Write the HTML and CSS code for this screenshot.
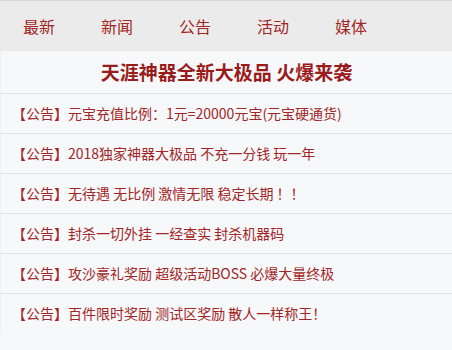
FILE: index.html
```html
<!DOCTYPE html>
<html lang="zh-CN">
<head>
    <meta charset="UTF-8">
    <meta name="viewport" content="width=device-width, initial-scale=1.0">
    <title>公告</title>
    <link rel="stylesheet" href="styles.css">
</head>
<body>
    <nav class="nav">
        <a href="#">最新</a>
        <a href="#">新闻</a>
        <a href="#">公告</a>
        <a href="#">活动</a>
        <a href="#">媒体</a>
    </nav>

    <div class="news">
        <h1 class="news-title">天涯神器全新大极品 火爆来袭</h1>
        <ul class="news-list">
            <li><a href="#">【公告】元宝充值比例：1元=20000元宝(元宝硬通货)</a></li>
            <li><a href="#">【公告】2018独家神器大极品 不充一分钱 玩一年</a></li>
            <li><a href="#">【公告】无待遇 无比例 激情无限 稳定长期 ！！</a></li>
            <li><a href="#">【公告】封杀一切外挂 一经查实 封杀机器码</a></li>
            <li><a href="#">【公告】攻沙豪礼奖励 超级活动BOSS 必爆大量终极</a></li>
            <li><a href="#">【公告】百件限时奖励 测试区奖励 散人一样称王！</a></li>
        </ul>
    </div>
</body>
</html>
```

FILE: styles.css
```css
body {
    margin: 0;
    font-family: "Microsoft YaHei", "Noto Sans CJK SC", "Noto Sans", sans-serif;
    background-color: #f7f8fa;
    color: #a22626;
}
a {
    color: #a22626;
    text-decoration: none;
}
.nav {
    display: flex;
    height: 51px;
    background-color: #ebebeb;
    border-top: 1px solid #d8d8d8;
    box-sizing: border-box;
}
.nav a {
    width: 78px;
    line-height: 51px;
    text-align: center;
    font-size: 16px;
}
.news {
    border-left: 1px solid #eef1f4;
}
.news-title {
    margin: 0;
    height: 42px;
    line-height: 42px;
    text-align: center;
    font-size: 19px;
    font-weight: bold;
    color: #9a1b1b;
    border-bottom: 1px solid #e2e3e5;
}
.news-list {
    list-style: none;
    margin: 0;
    padding: 0;
}
.news-list li {
    height: 39px;
    line-height: 39px;
    padding-left: 11px;
    font-size: 14px;
    border-bottom: 1px solid #e2e3e5;
    white-space: nowrap;
}
.news-list li:last-child {
    border-bottom: none;
}
```
